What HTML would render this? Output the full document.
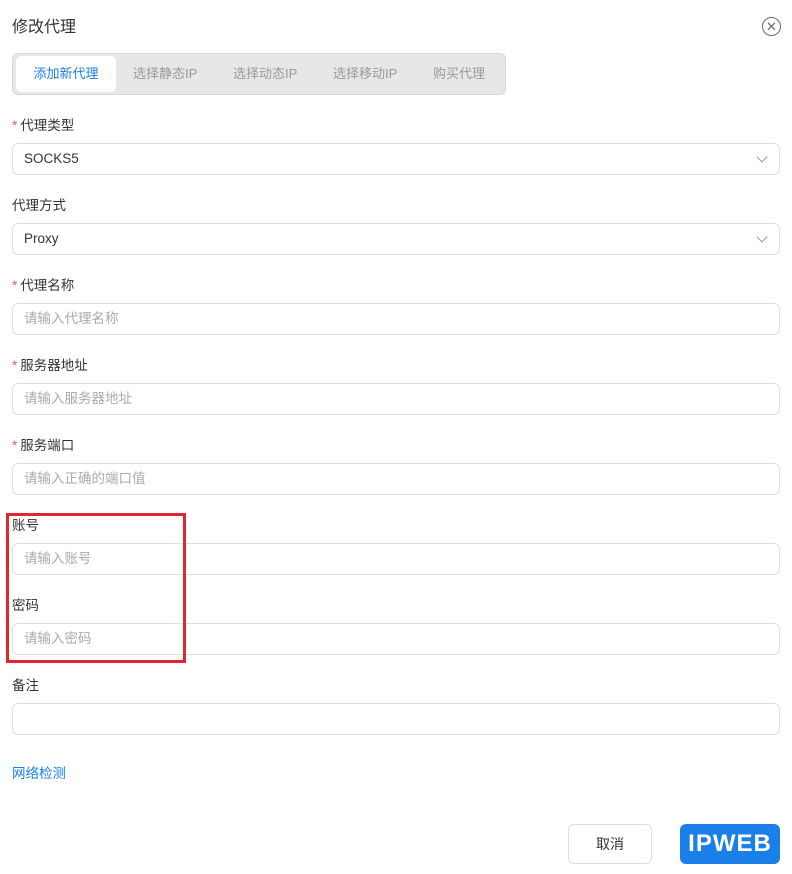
<!DOCTYPE html>
<html><head><meta charset="utf-8"><style>
body{margin:0;width:792px;height:874px;background:#fff;font-family:"Liberation Sans","Noto Sans CJK SC",sans-serif;position:relative;overflow:hidden;color:#333}
.a{position:absolute}
.title{left:12px;top:13px;font-size:16px;color:#333}
.close{left:762px;top:17px;width:17px;height:17px;border:1.5px solid #666;border-radius:50%;font-size:13px;line-height:17px;text-align:center;color:#666}
.tabs{left:12px;top:53px;width:494px;height:42px;background:#e6e7e9;border:1px solid #d8d8d8;border-radius:6px;box-sizing:border-box}
.tab{position:absolute;top:0;height:40px;line-height:40px;font-size:13px;color:#999}
.tab.on{background:#fff;color:#1a7fe8;border-radius:5px;left:3px;top:2px;height:36px;line-height:36px;width:100px;text-align:center}
.lbl{left:12px;font-size:13.5px;color:#333}
.lbl i{color:#e55;font-style:normal;margin-right:3px}
.in{left:12px;width:768px;height:32px;border:1px solid #dcdfe6;border-radius:6px;box-sizing:border-box;font-size:13.5px;line-height:30px;padding-left:11px;color:#aaa}
.in.v{color:#333}
.arr{position:absolute;right:13px;top:9px;width:7px;height:7px;border-right:1px solid #999;border-bottom:1px solid #999;transform:rotate(45deg)}
.red{left:6px;top:513px;width:180px;height:150px;border:3px solid #e0262f;box-sizing:border-box}
</style></head><body>
<div class="a title">修改代理</div>
<div class="a close">✕</div>
<div class="a tabs">
<div class="tab on">添加新代理</div>
<div class="tab" style="left:120px">选择静态IP</div>
<div class="tab" style="left:220px">选择动态IP</div>
<div class="tab" style="left:320px">选择移动IP</div>
<div class="tab" style="left:420px">购买代理</div>
</div>
<div class="a lbl" style="top:114px"><i>*</i>代理类型</div>
<div class="a in v" style="top:143px">SOCKS5<span class="arr"></span></div>
<div class="a lbl" style="top:194px">代理方式</div>
<div class="a in v" style="top:223px">Proxy<span class="arr"></span></div>
<div class="a lbl" style="top:274px"><i>*</i>代理名称</div>
<div class="a in" style="top:303px">请输入代理名称</div>
<div class="a lbl" style="top:354px"><i>*</i>服务器地址</div>
<div class="a in" style="top:383px">请输入服务器地址</div>
<div class="a lbl" style="top:434px"><i>*</i>服务端口</div>
<div class="a in" style="top:463px">请输入正确的端口值</div>
<div class="a lbl" style="top:514px">账号</div>
<div class="a in" style="top:543px">请输入账号</div>
<div class="a lbl" style="top:594px">密码</div>
<div class="a in" style="top:623px">请输入密码</div>
<div class="a red"></div>
<div class="a lbl" style="top:674px">备注</div>
<div class="a in" style="top:703px"></div>
<div class="a" style="left:12px;top:762px;font-size:13.5px;color:#1a7fe8">网络检测</div>
<div class="a" style="left:568px;top:824px;width:84px;height:40px;border:1px solid #dcdfe6;border-radius:6px;box-sizing:border-box;text-align:center;line-height:38px;font-size:14px">取消</div>
<div class="a" style="left:680px;top:824px;width:100px;height:40px;background:#1a7fe8;border-radius:6px;color:#fff;text-align:center;line-height:40px;font-size:24px;font-weight:bold;letter-spacing:1px">IPWEB</div>
</body></html>
